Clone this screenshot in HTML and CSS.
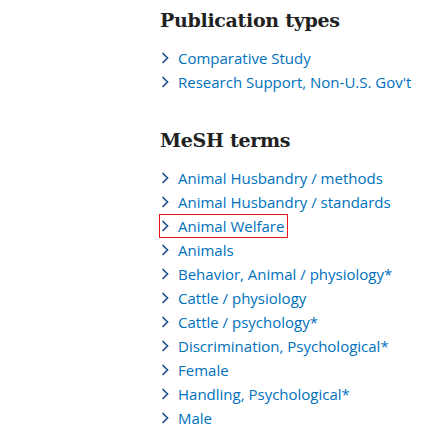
FILE: index.html
```html
<!DOCTYPE html>
<html>
<head>
<meta charset="utf-8">
<link rel="stylesheet" href="styles.css">
</head>
<body>
<div class="panel">
  <section class="group">
    <h2 class="title">Publication types</h2>
    <ul class="terms">
      <li><a class="term" href="#"><svg class="chev" viewBox="0 0 8 12"><polyline points="1.5,1 6.5,6 1.5,11"/></svg>Comparative Study</a></li>
      <li><a class="term" href="#"><svg class="chev" viewBox="0 0 8 12"><polyline points="1.5,1 6.5,6 1.5,11"/></svg>Research Support, Non-U.S. Gov't</a></li>
    </ul>
  </section>
  <section class="group">
    <h2 class="title">MeSH terms</h2>
    <ul class="terms">
      <li><a class="term" href="#"><svg class="chev" viewBox="0 0 8 12"><polyline points="1.5,1 6.5,6 1.5,11"/></svg>Animal Husbandry / methods</a></li>
      <li><a class="term" href="#"><svg class="chev" viewBox="0 0 8 12"><polyline points="1.5,1 6.5,6 1.5,11"/></svg>Animal Husbandry / standards</a></li>
      <li><a class="term focused" href="#"><svg class="chev" viewBox="0 0 8 12"><polyline points="1.5,1 6.5,6 1.5,11"/></svg>Animal Welfare</a></li>
      <li><a class="term" href="#"><svg class="chev" viewBox="0 0 8 12"><polyline points="1.5,1 6.5,6 1.5,11"/></svg>Animals</a></li>
      <li><a class="term" href="#"><svg class="chev" viewBox="0 0 8 12"><polyline points="1.5,1 6.5,6 1.5,11"/></svg>Behavior, Animal / physiology*</a></li>
      <li><a class="term" href="#"><svg class="chev" viewBox="0 0 8 12"><polyline points="1.5,1 6.5,6 1.5,11"/></svg>Cattle / physiology</a></li>
      <li><a class="term" href="#"><svg class="chev" viewBox="0 0 8 12"><polyline points="1.5,1 6.5,6 1.5,11"/></svg>Cattle / psychology*</a></li>
      <li><a class="term" href="#"><svg class="chev" viewBox="0 0 8 12"><polyline points="1.5,1 6.5,6 1.5,11"/></svg>Discrimination, Psychological*</a></li>
      <li><a class="term" href="#"><svg class="chev" viewBox="0 0 8 12"><polyline points="1.5,1 6.5,6 1.5,11"/></svg>Female</a></li>
      <li><a class="term" href="#"><svg class="chev" viewBox="0 0 8 12"><polyline points="1.5,1 6.5,6 1.5,11"/></svg>Handling, Psychological*</a></li>
      <li><a class="term" href="#"><svg class="chev" viewBox="0 0 8 12"><polyline points="1.5,1 6.5,6 1.5,11"/></svg>Male</a></li>
    </ul>
  </section>
</div>
</body>
</html>
```
FILE: styles.css
```css
html, body {
  margin: 0;
  padding: 0;
  background: #ffffff;
}
.panel {
  padding: 6px 0 0 160px;
}
.group + .group {
  margin-top: 32px;
}
.title {
  margin: 0;
  font-family: "DejaVu Serif", "Liberation Serif", serif;
  font-weight: 700;
  font-size: 19px;
  letter-spacing: -0.3px;
  line-height: 28px;
  color: #212121;
}
.terms {
  list-style: none;
  margin: 12px 0 0;
  padding: 0;
}
.terms li {
  font-family: "Open Sans", "Noto Sans", sans-serif;
  font-size: 15px;
  line-height: 24px;
  height: 24px;
}
.term {
  display: inline-flex;
  align-items: center;
  height: 22px;
  padding: 0 3px 0 1px;
  color: #0071bc;
  text-decoration: none;
}
.chev {
  width: 8px;
  height: 12px;
  margin-right: 9px;
  fill: none;
  stroke: #205493;
  stroke-width: 1.7;
}
.focused {
  outline: 1px solid #e3141b;
}
```
